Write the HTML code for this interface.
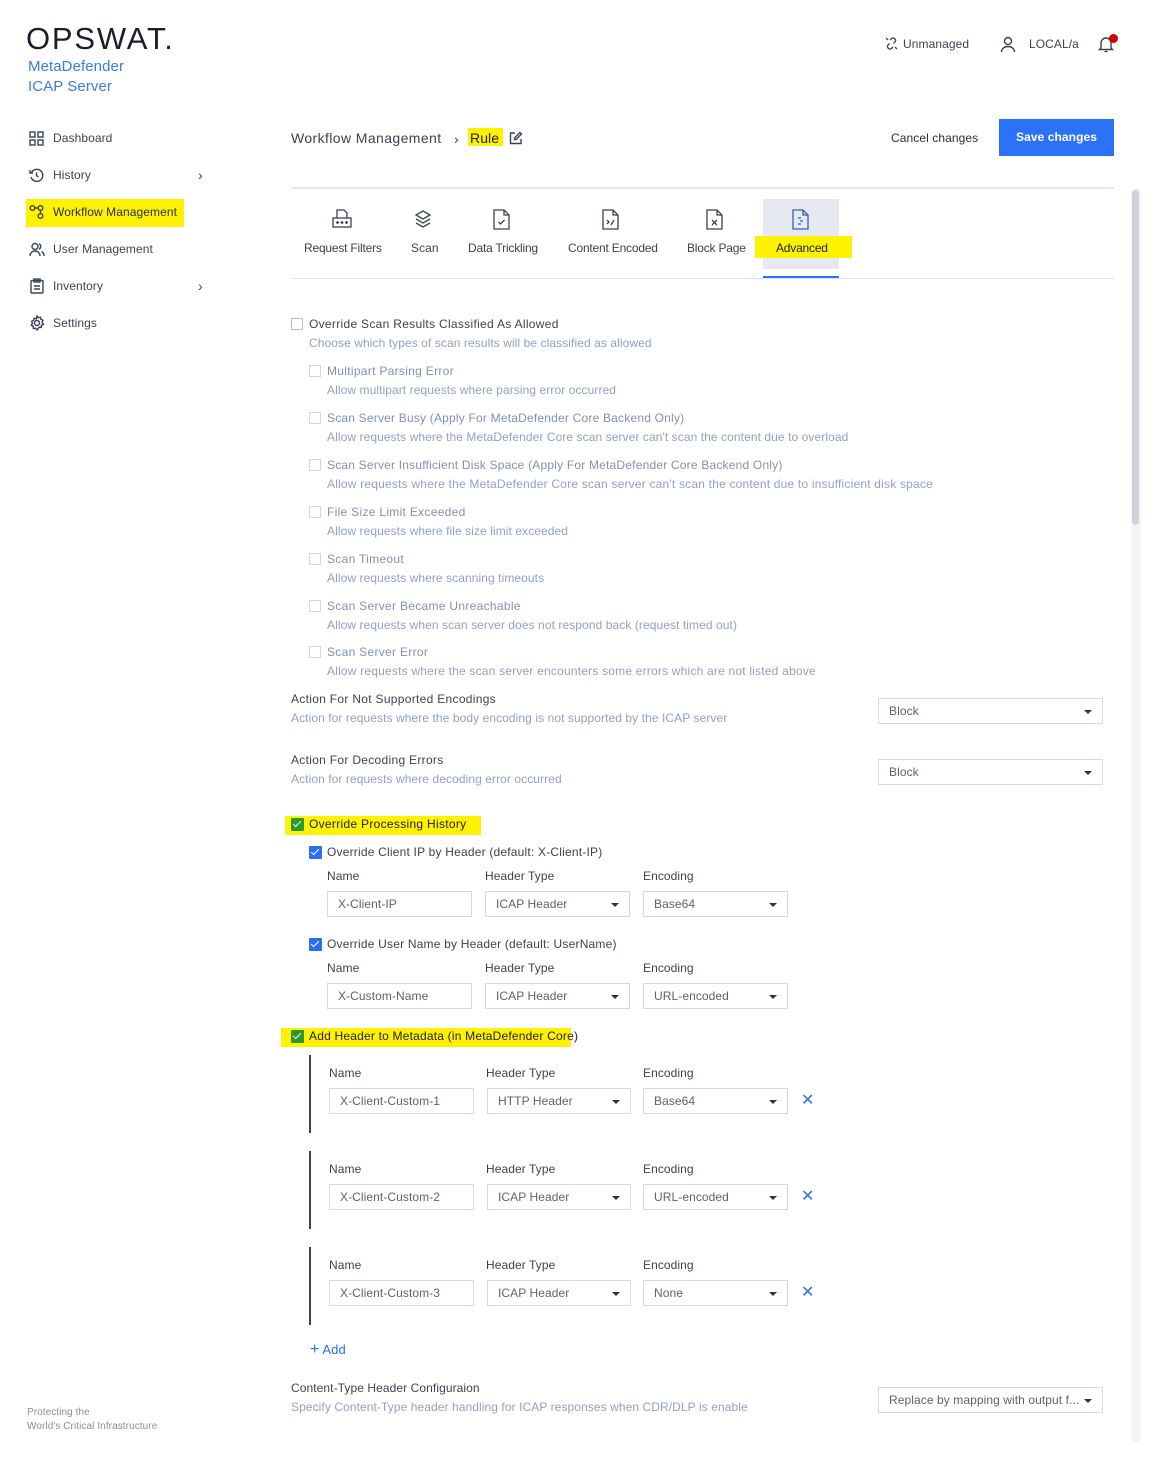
<!DOCTYPE html>
<html><head><meta charset="utf-8"><style>
*{margin:0;padding:0;box-sizing:border-box}
body{width:1166px;height:1480px;background:#fff;position:relative;font-family:"Liberation Sans",sans-serif;font-size:12px;color:#3b4252;overflow:hidden;letter-spacing:0.08px}
.t{position:absolute;white-space:nowrap;line-height:16px}
.d{color:#93a0c4}
.g{color:#8390b0}
.hl{position:absolute;background:#fff200}
.cb{position:absolute;width:12px;height:12px;border:1px solid #b8bcc6;background:#fff}
.cbl{border-color:#d4d7de}
.ck{position:absolute;width:13px;height:13px;background:#2a6ff2;border-radius:1px}
.ck:after{content:"";position:absolute;left:4px;top:1px;width:3px;height:7px;border:solid #fff;border-width:0 1.5px 1.5px 0;transform:rotate(45deg)}
.ckg{background:#2a9a2a}
.in{position:absolute;height:26px;border:1px solid #d6d9e0;background:#fff;padding-left:10px;line-height:24px;color:#5b6270;font-size:12px}
.sel:after{content:"";position:absolute;right:10px;top:11px;border-left:4px solid transparent;border-right:4px solid transparent;border-top:4px solid #333}
.vl{position:absolute;left:309px;width:2px;background:#3b4252}
.x{position:absolute;color:#2a6ff2;font-size:16px;line-height:16px}
</style></head><body>

<!-- sidebar -->
<div class="t" style="left:26px;top:22px;font-size:31px;line-height:34px;letter-spacing:1.8px;color:#1a1e2a">OPSWAT.</div>
<div class="t" style="left:28px;top:58px;font-size:15px;line-height:18px;color:#3c7be0">MetaDefender</div>
<div class="t" style="left:28px;top:78px;font-size:15px;line-height:18px;color:#3c7be0">ICAP Server</div>

<svg style="position:absolute;left:29px;top:131px" width="15" height="15" viewBox="0 0 15 15" fill="none" stroke="#3b4252" stroke-width="1.4"><rect x="1" y="1" width="5" height="5"/><rect x="9" y="1" width="5" height="5"/><rect x="1" y="9" width="5" height="5"/><rect x="9" y="9" width="5" height="5"/></svg>
<div class="t" style="left:53px;top:130px">Dashboard</div>
<svg style="position:absolute;left:29px;top:168px" width="15" height="15" viewBox="0 0 15 15" fill="none" stroke="#3b4252" stroke-width="1.4"><path d="M2.5 4.5A6 6 0 1 1 2 9"/><path d="M1 2v3h3"/><path d="M7.5 4.5v3l2 1.5"/></svg>
<div class="t" style="left:53px;top:167px">History</div>
<div class="t" style="left:198px;top:167px;font-size:14px">›</div>
<div class="hl" style="left:26px;top:199px;width:158px;height:28px"></div>
<svg style="position:absolute;left:29px;top:204px" width="16" height="16" viewBox="0 0 16 16" fill="none" stroke="#3b4252" stroke-width="1.4"><circle cx="3.5" cy="4" r="2.3"/><circle cx="11.5" cy="4" r="2.3"/><circle cx="11.5" cy="12" r="2.3"/><path d="M5.8 4h3.4M11.5 6.3v3.4"/></svg>
<div class="t" style="left:53px;top:204px;color:#2a2f38">Workflow Management</div>
<svg style="position:absolute;left:29px;top:242px" width="16" height="15" viewBox="0 0 16 15" fill="none" stroke="#3b4252" stroke-width="1.4"><circle cx="6" cy="4.5" r="3"/><path d="M1 14c0-3 2.2-5 5-5s5 2 5 5M10 1.8a3 3 0 0 1 0 5.4M12.5 9.5c1.6.8 2.5 2.4 2.5 4.5"/></svg>
<div class="t" style="left:53px;top:241px">User Management</div>
<svg style="position:absolute;left:30px;top:278px" width="14" height="16" viewBox="0 0 14 16" fill="none" stroke="#3b4252" stroke-width="1.4"><rect x="1" y="2.5" width="12" height="12.5" rx="1"/><rect x="4" y="1" width="6" height="3"/><path d="M4 8h6M4 11h6"/></svg>
<div class="t" style="left:53px;top:278px">Inventory</div>
<div class="t" style="left:198px;top:278px;font-size:14px">›</div>
<svg style="position:absolute;left:29px;top:315px" width="16" height="16" viewBox="0 0 16 16" fill="none" stroke="#3b4252" stroke-width="1.4"><circle cx="8" cy="8" r="2.5"/><path d="M8 1l1.3 1.8 2.2-.6.4 2.2 2.1.9-.9 2.1 1.3 1.8-2 1-.1 2.3-2.2-.3L8 15l-1.5-1.8-2.2.3-.1-2.3-2-1 1.3-1.8-.9-2.1 2.1-.9.4-2.2 2.2.6z"/></svg>
<div class="t" style="left:53px;top:315px">Settings</div>

<div class="t" style="left:27px;top:1406px;font-size:10px;line-height:13px;color:#8a8f9a">Protecting the</div>
<div class="t" style="left:27px;top:1420px;font-size:10px;line-height:13px;color:#8a8f9a">World's Critical Infrastructure</div>

<!-- header right -->
<svg style="position:absolute;left:885px;top:37px" width="13" height="13" viewBox="0 0 13 13" fill="none" stroke="#3b4252" stroke-width="1.3"><path d="M5 3l1.5-1.5a2.5 2.5 0 0 1 3.5 3.5L8.5 6.5M4.5 6.5L3 8a2.5 2.5 0 0 0 3.5 3.5L8 10M1 1l2 2M10 10l2 2"/></svg>
<div class="t" style="left:903px;top:36px">Unmanaged</div>
<svg style="position:absolute;left:1000px;top:36px" width="16" height="17" viewBox="0 0 16 17" fill="none" stroke="#3b4252" stroke-width="1.4"><circle cx="8" cy="5" r="3.5"/><path d="M1.5 16c0-3.5 3-5.5 6.5-5.5s6.5 2 6.5 5.5"/></svg>
<div class="t" style="left:1029px;top:36px">LOCAL/a</div>
<svg style="position:absolute;left:1098px;top:36px" width="16" height="17" viewBox="0 0 16 17" fill="none" stroke="#3b4252" stroke-width="1.4"><path d="M3 12V7a5 5 0 0 1 10 0v5l1.5 1.5h-13zM6.5 15.5h3"/></svg>
<div style="position:absolute;left:1109px;top:34px;width:9px;height:9px;border-radius:50%;background:#d40000"></div>

<!-- breadcrumb -->
<div class="t" style="left:291px;top:129px;font-size:14px;line-height:18px;color:#3b4252;letter-spacing:0.4px">Workflow Management</div>
<div class="t" style="left:454px;top:131px;font-size:14px">›</div>
<div class="hl" style="left:468px;top:128px;width:35px;height:18px"></div>
<div class="t" style="left:470px;top:129px;font-size:14px;line-height:18px;color:#222">Rule</div>
<svg style="position:absolute;left:509px;top:131px" width="14" height="14" viewBox="0 0 14 14" fill="none" stroke="#3b4252" stroke-width="1.4"><path d="M6 2H1.5v10.5H12V8"/><path d="M11 1.5l1.5 1.5L7 8.5H5.5V7z"/></svg>
<div class="t" style="left:891px;top:130px;color:#2a2f38">Cancel changes</div>
<div style="position:absolute;left:999px;top:119px;width:115px;height:37px;background:#2b72f6;color:#fff;font-weight:bold;text-align:center;line-height:37px">Save changes</div>

<!-- tabs -->
<div style="position:absolute;left:291px;top:187px;width:823px;height:2px;background:#e6e8ee"></div>
<div style="position:absolute;left:763px;top:199px;width:76px;height:70px;background:#e7e9f1"></div>
<div class="hl" style="left:755px;top:236px;width:97px;height:22px"></div>
<div style="position:absolute;left:763px;top:276px;width:76px;height:3px;background:#2b72f6"></div>
<div style="position:absolute;left:291px;top:278px;width:823px;height:1px;background:#dfe2e8"></div>
<svg style="position:absolute;left:332px;top:209px" width="20" height="20" viewBox="0 0 20 20" fill="none" stroke="#3b4252" stroke-width="1.3"><path d="M5 9V1h7l3 3v5"/><rect x="1" y="9" width="18" height="9"/><path d="M4 13.5h3M5.5 12v3M8.5 13.5h3M10 12v3M13 13.5h3M14.5 12v3"/></svg>
<div class="t" style="left:304px;top:240px;letter-spacing:-0.2px">Request Filters</div>
<svg style="position:absolute;left:414px;top:210px" width="18" height="19" viewBox="0 0 18 19" fill="none" stroke="#3b4252" stroke-width="1.3"><path d="M9 1l7 4-7 4-7-4z"/><path d="M2 9l7 4 7-4M2 13l7 4 7-4"/></svg>
<div class="t" style="left:411px;top:240px">Scan</div>
<svg style="position:absolute;left:493px;top:209px" width="18" height="21" viewBox="0 0 18 21" fill="none" stroke="#3b4252" stroke-width="1.3"><path d="M1 1h10l5 5v14H1z M11 1v5h5"/><path d="M5.5 13l2 2 4-4"/></svg>
<div class="t" style="left:468px;top:240px;letter-spacing:-0.2px">Data Trickling</div>
<svg style="position:absolute;left:602px;top:209px" width="18" height="21" viewBox="0 0 18 21" fill="none" stroke="#3b4252" stroke-width="1.3"><path d="M1 1h10l5 5v14H1z M11 1v5h5"/><path d="M5 11l2 2-2 2M9 16l3-5"/></svg>
<div class="t" style="left:568px;top:240px;letter-spacing:-0.2px">Content Encoded</div>
<svg style="position:absolute;left:706px;top:209px" width="18" height="21" viewBox="0 0 18 21" fill="none" stroke="#3b4252" stroke-width="1.3"><path d="M1 1h10l5 5v14H1z M11 1v5h5"/><path d="M6 11l5 5M11 11l-5 5"/></svg>
<div class="t" style="left:687px;top:240px;letter-spacing:-0.2px">Block Page</div>
<svg style="position:absolute;left:792px;top:209px" width="18" height="21" viewBox="0 0 18 21" fill="none" stroke="#3a5fb0" stroke-width="1.3"><path d="M1 1h10l5 5v14H1z M11 1v5h5"/><path d="M6 9h3M8 12h3M6 15h3"/></svg>
<div class="t" style="left:776px;top:240px;color:#222;letter-spacing:-0.2px">Advanced</div>

<!-- scrollbar -->
<div style="position:absolute;left:1131px;top:188px;width:10px;height:1254px;background:#f3f4f7;border-radius:5px"></div>
<div style="position:absolute;left:1132px;top:190px;width:7px;height:335px;background:#cfd2d9;border-radius:4px"></div>

<!-- override scan results -->
<div class="cb" style="left:291px;top:318px"></div>
<div class="t" style="left:309px;top:316px;letter-spacing:0.3px">Override Scan Results Classified As Allowed</div>
<div class="t d" style="left:309px;top:335px">Choose which types of scan results will be classified as allowed</div>

<div class="cb cbl" style="left:309px;top:365px"></div><div class="t g" style="left:327px;top:363px;letter-spacing:0.3px">Multipart Parsing Error</div><div class="t d" style="left:327px;top:382px">Allow multipart requests where parsing error occurred</div>
<div class="cb cbl" style="left:309px;top:412px"></div><div class="t g" style="left:327px;top:410px;letter-spacing:0.2px">Scan Server Busy (Apply For MetaDefender Core Backend Only)</div><div class="t d" style="left:327px;top:429px">Allow requests where the MetaDefender Core scan server can't scan the content due to overload</div>
<div class="cb cbl" style="left:309px;top:459px"></div><div class="t g" style="left:327px;top:457px;letter-spacing:0.2px">Scan Server Insufficient Disk Space (Apply For MetaDefender Core Backend Only)</div><div class="t d" style="left:327px;top:476px;letter-spacing:0.2px">Allow requests where the MetaDefender Core scan server can't scan the content due to insufficient disk space</div>
<div class="cb cbl" style="left:309px;top:506px"></div><div class="t g" style="left:327px;top:504px;letter-spacing:0.3px">File Size Limit Exceeded</div><div class="t d" style="left:327px;top:523px">Allow requests where file size limit exceeded</div>
<div class="cb cbl" style="left:309px;top:553px"></div><div class="t g" style="left:327px;top:551px;letter-spacing:0.3px">Scan Timeout</div><div class="t d" style="left:327px;top:570px">Allow requests where scanning timeouts</div>
<div class="cb cbl" style="left:309px;top:600px"></div><div class="t g" style="left:327px;top:598px;letter-spacing:0.3px">Scan Server Became Unreachable</div><div class="t d" style="left:327px;top:617px">Allow requests when scan server does not respond back (request timed out)</div>
<div class="cb cbl" style="left:309px;top:646px"></div><div class="t g" style="left:327px;top:644px;letter-spacing:0.3px">Scan Server Error</div><div class="t d" style="left:327px;top:663px;letter-spacing:0.2px">Allow requests where the scan server encounters some errors which are not listed above</div>

<div class="t" style="left:291px;top:691px;letter-spacing:0.3px">Action For Not Supported Encodings</div>
<div class="t d" style="left:291px;top:710px">Action for requests where the body encoding is not supported by the ICAP server</div>
<div class="in sel" style="left:878px;top:698px;width:225px">Block</div>
<div class="t" style="left:291px;top:752px;letter-spacing:0.3px">Action For Decoding Errors</div>
<div class="t d" style="left:291px;top:771px">Action for requests where decoding error occurred</div>
<div class="in sel" style="left:878px;top:759px;width:225px">Block</div>

<!-- processing history -->
<div class="hl" style="left:285px;top:816px;width:196px;height:19px"></div>
<div class="ck ckg" style="left:291px;top:818px"></div>
<div class="t" style="left:309px;top:816px;color:#222;letter-spacing:0.3px">Override Processing History</div>
<div class="ck" style="left:309px;top:846px"></div>
<div class="t" style="left:327px;top:844px;letter-spacing:0.2px">Override Client IP by Header (default: X-Client-IP)</div>
<div class="t" style="left:327px;top:868px">Name</div><div class="t" style="left:485px;top:868px">Header Type</div><div class="t" style="left:643px;top:868px">Encoding</div>
<div class="in" style="left:327px;top:891px;width:145px">X-Client-IP</div>
<div class="in sel" style="left:485px;top:891px;width:145px">ICAP Header</div>
<div class="in sel" style="left:643px;top:891px;width:145px">Base64</div>
<div class="ck" style="left:309px;top:938px"></div>
<div class="t" style="left:327px;top:936px;letter-spacing:0.2px">Override User Name by Header (default: UserName)</div>
<div class="t" style="left:327px;top:960px">Name</div><div class="t" style="left:485px;top:960px">Header Type</div><div class="t" style="left:643px;top:960px">Encoding</div>
<div class="in" style="left:327px;top:983px;width:145px">X-Custom-Name</div>
<div class="in sel" style="left:485px;top:983px;width:145px">ICAP Header</div>
<div class="in sel" style="left:643px;top:983px;width:145px">URL-encoded</div>

<div class="hl" style="left:281px;top:1028px;width:290px;height:19px"></div>
<div class="ck ckg" style="left:291px;top:1030px"></div>
<div class="t" style="left:309px;top:1028px;color:#222;letter-spacing:0.2px">Add Header to Metadata (in MetaDefender Core)</div>

<div class="vl" style="top:1055px;height:78px"></div>
<div class="t" style="left:329px;top:1065px">Name</div><div class="t" style="left:486px;top:1065px">Header Type</div><div class="t" style="left:643px;top:1065px">Encoding</div>
<div class="in" style="left:329px;top:1088px;width:145px">X-Client-Custom-1</div>
<div class="in sel" style="left:487px;top:1088px;width:144px">HTTP Header</div>
<div class="in sel" style="left:643px;top:1088px;width:145px">Base64</div>
<div class="x" style="left:801px;top:1093px">✕</div>

<div class="vl" style="top:1151px;height:78px"></div>
<div class="t" style="left:329px;top:1161px">Name</div><div class="t" style="left:486px;top:1161px">Header Type</div><div class="t" style="left:643px;top:1161px">Encoding</div>
<div class="in" style="left:329px;top:1184px;width:145px">X-Client-Custom-2</div>
<div class="in sel" style="left:487px;top:1184px;width:144px">ICAP Header</div>
<div class="in sel" style="left:643px;top:1184px;width:145px">URL-encoded</div>
<div class="x" style="left:801px;top:1189px">✕</div>

<div class="vl" style="top:1247px;height:78px"></div>
<div class="t" style="left:329px;top:1257px">Name</div><div class="t" style="left:486px;top:1257px">Header Type</div><div class="t" style="left:643px;top:1257px">Encoding</div>
<div class="in" style="left:329px;top:1280px;width:145px">X-Client-Custom-3</div>
<div class="in sel" style="left:487px;top:1280px;width:144px">ICAP Header</div>
<div class="in sel" style="left:643px;top:1280px;width:145px">None</div>
<div class="x" style="left:801px;top:1285px">✕</div>

<div class="t" style="left:310px;top:1342px;color:#2a6ff2;font-size:13px"><span style="font-size:16px">+</span> Add</div>

<div class="t" style="left:291px;top:1380px">Content-Type Header Configuraion</div>
<div class="t d" style="left:291px;top:1399px">Specify Content-Type header handling for ICAP responses when CDR/DLP is enable</div>
<div class="in sel" style="left:878px;top:1387px;width:225px;padding-right:26px;overflow:hidden;white-space:nowrap">Replace by mapping with output f...</div>
</body></html>
